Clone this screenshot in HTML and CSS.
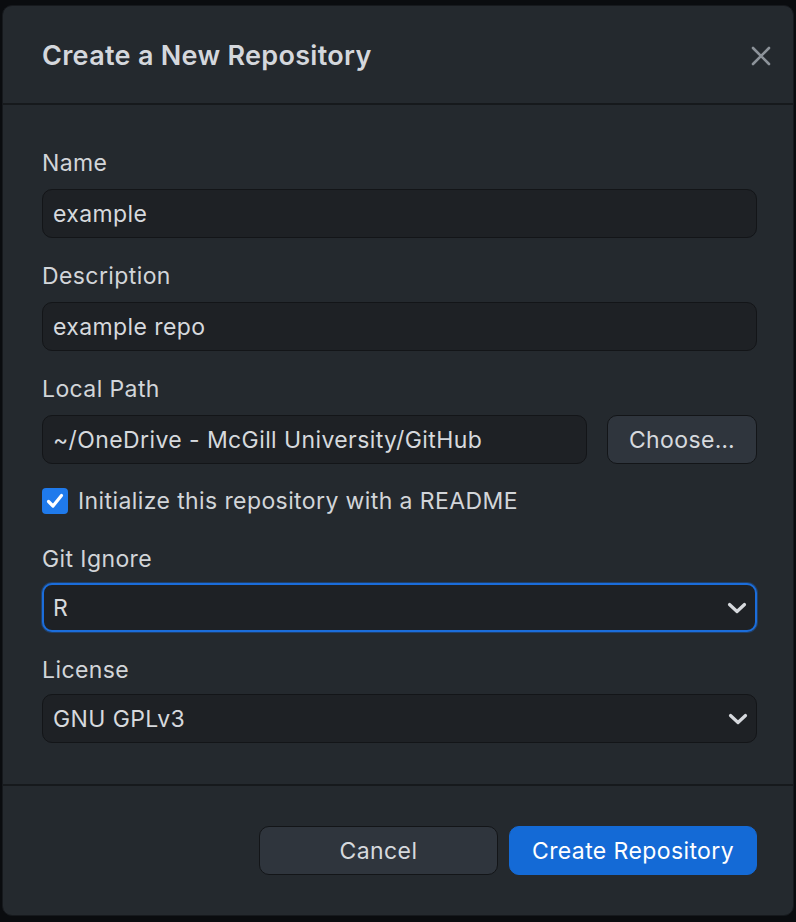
FILE: index.html
```html
<!DOCTYPE html>
<html lang="en">
<head>
<meta charset="utf-8">
<title>Create a New Repository</title>
<link rel="stylesheet" href="styles.css">
</head>
<body>
<div class="dialog">
  <header class="dialog-header">
    <h1 class="dialog-title">Create a New Repository</h1>
    <button class="close-btn" aria-label="Close">
      <svg width="20" height="20" viewBox="0 0 20 20"><path d="M2 2 L18 18 M18 2 L2 18" stroke="#8c9299" stroke-width="2.6" stroke-linecap="round" fill="none"/></svg>
    </button>
  </header>
  <div class="dialog-body">
    <div class="field">
      <label class="field-label">Name</label>
      <div class="text-input">example</div>
    </div>
    <div class="field">
      <label class="field-label">Description</label>
      <div class="text-input">example repo</div>
    </div>
    <div class="field">
      <label class="field-label">Local Path</label>
      <div class="path-row">
        <div class="text-input path-input">~/OneDrive - McGill University/GitHub</div>
        <button class="btn btn-secondary choose-btn">Choose…</button>
      </div>
    </div>
    <div class="check-row">
      <span class="checkbox">
        <svg width="18" height="16" viewBox="0 0 18 16"><path d="M2.5 8.5 L7 13 L15.5 2.5" stroke="#fff" stroke-width="3.2" fill="none" stroke-linecap="round" stroke-linejoin="round"/></svg>
      </span>
      <span class="check-label">Initialize this repository with a README</span>
    </div>
    <div class="field field-gitignore">
      <label class="field-label">Git Ignore</label>
      <div class="select select-focused">
        <span>R</span>
        <svg class="chevron" width="20" height="12" viewBox="0 0 20 12"><path d="M2.5 2.5 L10 9.5 L17.5 2.5" stroke="#d6d9dd" stroke-width="3.2" fill="none" stroke-linecap="round" stroke-linejoin="round"/></svg>
      </div>
    </div>
    <div class="field field-license">
      <label class="field-label">License</label>
      <div class="select">
        <span>GNU GPLv3</span>
        <svg class="chevron" width="20" height="12" viewBox="0 0 20 12"><path d="M2.5 2.5 L10 9.5 L17.5 2.5" stroke="#d6d9dd" stroke-width="3.2" fill="none" stroke-linecap="round" stroke-linejoin="round"/></svg>
      </div>
    </div>
  </div>
  <footer class="dialog-footer">
    <button class="btn btn-secondary cancel-btn">Cancel</button>
    <button class="btn btn-primary create-btn">Create Repository</button>
  </footer>
</div>
</body>
</html>
```

FILE: styles.css
```css
* { box-sizing: border-box; }

html, body {
  margin: 0;
  padding: 0;
  background: #0a0c0f;
}

body {
  font-family: "Inter", "Liberation Sans", sans-serif;
  color: #d2d5d9;
  padding: 5px 2px 0 2px;
}

.dialog {
  width: 792px;
  height: 911px;
  background: #24292e;
  border: 1px solid #16191d;
  border-radius: 10px;
  display: flex;
  flex-direction: column;
  overflow: hidden;
}

.dialog-header {
  height: 99px;
  flex: none;
  display: flex;
  align-items: center;
  justify-content: space-between;
  padding: 2px 22px 0 39px;
  border-bottom: 2px solid #16191c;
}

.dialog-title {
  margin: 0;
  font-size: 27px;
  font-weight: 600;
  color: #d4d7dc;
  letter-spacing: 0.3px;
}

.close-btn {
  background: none;
  border: none;
  padding: 0;
  width: 20px;
  height: 20px;
  display: flex;
}

.dialog-body {
  flex: none;
  padding: 44px 36px 41px 39px;
  border-bottom: 2px solid #16191c;
}

.field {
  display: flex;
  flex-direction: column;
  gap: 12px;
  margin-bottom: 24px;
}

.field-label {
  font-size: 23px;
  line-height: 28px;
  letter-spacing: 0.4px;
  color: #d2d5d9;
}

.text-input,
.select {
  height: 49px;
  background: #1e2125;
  border: 1px solid #131518;
  border-radius: 10px;
  padding: 0 10px;
  font-size: 23px;
  letter-spacing: 0.4px;
  color: #d6d9dd;
  display: flex;
  align-items: center;
}

.path-row {
  display: flex;
  gap: 20px;
}

.path-input {
  flex: 1;
}

.btn {
  font-family: inherit;
  font-size: 23px;
  letter-spacing: 0.4px;
  height: 49px;
  border-radius: 10px;
  cursor: pointer;
}

.btn-secondary {
  background: #2f353d;
  border: 1px solid #131518;
  color: #d6d9dd;
}

.btn-primary {
  background: #146ad6;
  border: 1px solid #146ad6;
  color: #ffffff;
}

.choose-btn {
  width: 150px;
  flex: none;
}

.check-row {
  display: flex;
  align-items: center;
  gap: 10px;
  height: 34px;
  margin-top: -4px;
  margin-bottom: 27px;
}

.checkbox {
  width: 26px;
  height: 26px;
  border-radius: 4px;
  background: #1f7aec;
  display: flex;
  align-items: center;
  justify-content: center;
}

.check-label {
  font-size: 23px;
  letter-spacing: 0.4px;
  color: #d2d5d9;
}

.field-gitignore {
  gap: 10px;
  margin-bottom: 24px;
}

.field-license {
  gap: 10px;
  margin-bottom: 0;
}

.select {
  justify-content: space-between;
  padding-right: 8px;
}

.select-focused {
  border: 2px solid #1b6ddb;
  box-shadow: 0 0 0 1px rgba(27, 109, 219, 0.35);
  padding-left: 9px;
}

.dialog-footer {
  flex: 1;
  display: flex;
  justify-content: flex-end;
  align-items: flex-start;
  gap: 11px;
  padding: 40px 36px 0 0;
}

.cancel-btn {
  width: 239px;
}

.create-btn {
  width: 248px;
}
```
